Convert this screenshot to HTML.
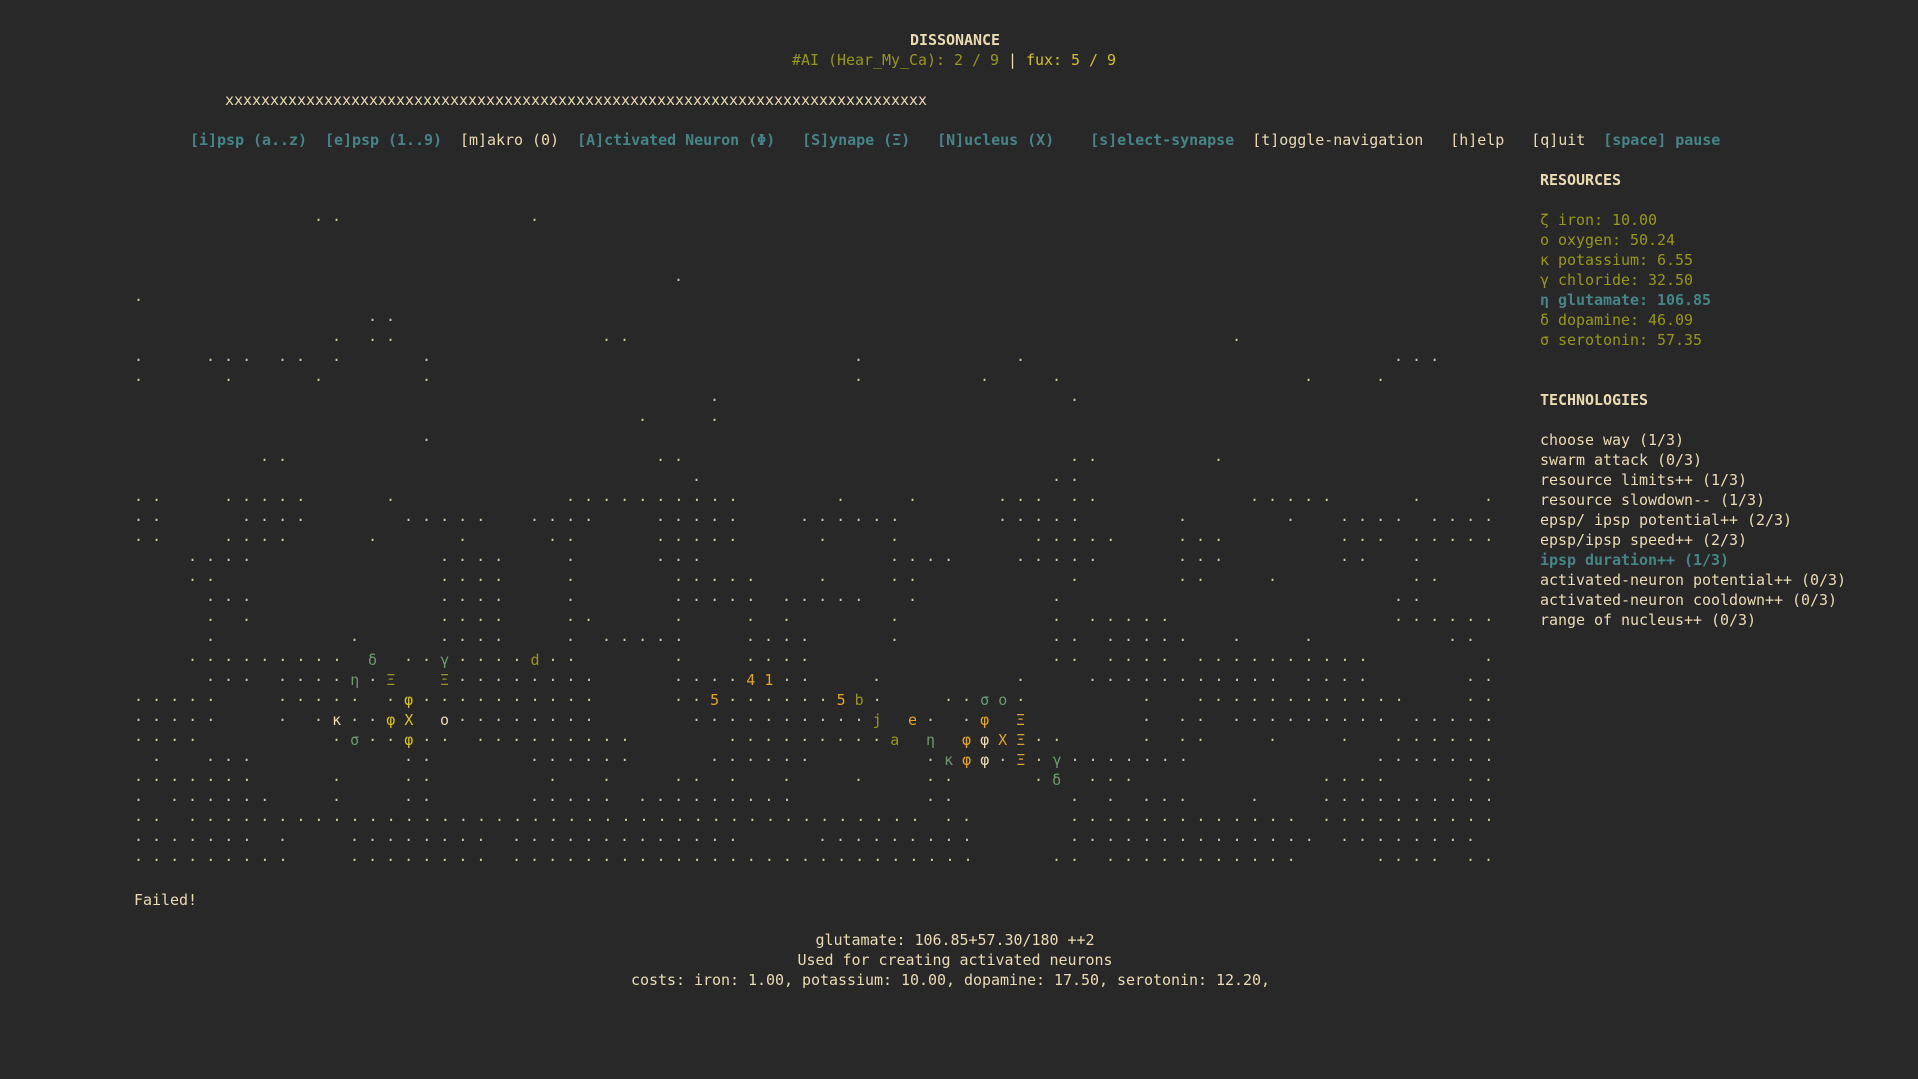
<!DOCTYPE html>
<html><head><meta charset="utf-8">
<style>
html,body{margin:0;padding:0;background:#282828;width:1918px;height:1078px;overflow:hidden}
body{position:relative;top:1px;font-family:"DejaVu Sans Mono","Liberation Mono",monospace;font-size:15px;line-height:20px;color:#ebdbb2;letter-spacing:-0.03px}
.l{position:absolute;white-space:pre;height:20px}
.c{position:absolute;left:0;width:1910px;text-align:center;white-space:pre}
.b{font-weight:bold}
.t{color:#458588;font-weight:bold}
.o{color:#98971a}
.y{color:#d7c21a}
.g{color:#e6a422}
.a{color:#689d6a}
.m{position:absolute;left:134px;top:0;letter-spacing:0}
.m div{position:absolute;left:0;height:20px;white-space:pre;color:#d5c4a1}
.m span{position:absolute;left:calc(var(--k)*18px);font-style:normal}
.m i{font-style:normal}
</style></head><body>
<div class="l b" style="left:910px;top:29px">DISSONANCE</div>
<div class="l" style="left:792px;top:49px"><span class="o">#AI (Hear_My_Ca): 2 / 9</span> | <span class="y">fux: 5 / 9</span></div>
<div class="l" style="left:225px;top:89px">xxxxxxxxxxxxxxxxxxxxxxxxxxxxxxxxxxxxxxxxxxxxxxxxxxxxxxxxxxxxxxxxxxxxxxxxxxxxxx</div>
<div class="l" style="left:190px;top:129px"><span class="t">[i]psp (a..z)</span>  <span class="t">[e]psp (1..9)</span>  [m]akro (0)  <span class="t">[A]ctivated Neuron (Φ)</span>   <span class="t">[S]ynape (Ξ)</span>   <span class="t">[N]ucleus (X)</span>    <span class="t">[s]elect-synapse</span>  [t]oggle-navigation   [h]elp   [q]uit  <span class="t">[space] pause</span></div>

<div class="l b" style="left:1540px;top:169px">RESOURCES</div>
<div class="l o" style="left:1540px;top:209px">ζ iron: 10.00</div>
<div class="l o" style="left:1540px;top:229px">ο oxygen: 50.24</div>
<div class="l o" style="left:1540px;top:249px">κ potassium: 6.55</div>
<div class="l o" style="left:1540px;top:269px">γ chloride: 32.50</div>
<div class="l t" style="left:1540px;top:289px">η glutamate: 106.85</div>
<div class="l o" style="left:1540px;top:309px">δ dopamine: 46.09</div>
<div class="l o" style="left:1540px;top:329px">σ serotonin: 57.35</div>

<div class="l b" style="left:1540px;top:389px">TECHNOLOGIES</div>
<div class="l" style="left:1540px;top:429px">choose way (1/3)</div>
<div class="l" style="left:1540px;top:449px">swarm attack (0/3)</div>
<div class="l" style="left:1540px;top:469px">resource limits++ (1/3)</div>
<div class="l" style="left:1540px;top:489px">resource slowdown-- (1/3)</div>
<div class="l" style="left:1540px;top:509px">epsp/ ipsp potential++ (2/3)</div>
<div class="l" style="left:1540px;top:529px">epsp/ipsp speed++ (2/3)</div>
<div class="l t" style="left:1540px;top:549px">ipsp duration++ (1/3)</div>
<div class="l" style="left:1540px;top:569px">activated-neuron potential++ (0/3)</div>
<div class="l" style="left:1540px;top:589px">activated-neuron cooldown++ (0/3)</div>
<div class="l" style="left:1540px;top:609px">range of nucleus++ (0/3)</div>

<div class="m">
<div style="top:209px"><span style="--k:10">· ·</span><span style="--k:22">·</span></div>
<div style="top:269px"><span style="--k:30">·</span></div>
<div style="top:289px"><span style="--k:0">·</span></div>
<div style="top:309px"><span style="--k:13">· ·</span></div>
<div style="top:329px"><span style="--k:11">·</span><span style="--k:13">· ·</span><span style="--k:26">· ·</span><span style="--k:61">·</span></div>
<div style="top:349px"><span style="--k:0">·</span><span style="--k:4">· · ·</span><span style="--k:8">· ·</span><span style="--k:11">·</span><span style="--k:16">·</span><span style="--k:40">·</span><span style="--k:49">·</span><span style="--k:70">· · ·</span></div>
<div style="top:369px"><span style="--k:0">·</span><span style="--k:5">·</span><span style="--k:10">·</span><span style="--k:16">·</span><span style="--k:40">·</span><span style="--k:47">·</span><span style="--k:51">·</span><span style="--k:65">·</span><span style="--k:69">·</span></div>
<div style="top:389px"><span style="--k:32">·</span><span style="--k:52">·</span></div>
<div style="top:409px"><span style="--k:28">·</span><span style="--k:32">·</span></div>
<div style="top:429px"><span style="--k:16">·</span></div>
<div style="top:449px"><span style="--k:7">· ·</span><span style="--k:29">· ·</span><span style="--k:52">· ·</span><span style="--k:60">·</span></div>
<div style="top:469px"><span style="--k:31">·</span><span style="--k:51">· ·</span></div>
<div style="top:489px"><span style="--k:0">· ·</span><span style="--k:5">· · · · ·</span><span style="--k:14">·</span><span style="--k:24">· · · · · · · · · ·</span><span style="--k:39">·</span><span style="--k:43">·</span><span style="--k:48">· · ·</span><span style="--k:52">· ·</span><span style="--k:62">· · · · ·</span><span style="--k:71">·</span><span style="--k:75">·</span></div>
<div style="top:509px"><span style="--k:0">· ·</span><span style="--k:6">· · · ·</span><span style="--k:15">· · · · ·</span><span style="--k:22">· · · ·</span><span style="--k:29">· · · · ·</span><span style="--k:37">· · · · · ·</span><span style="--k:48">· · · · ·</span><span style="--k:58">·</span><span style="--k:64">·</span><span style="--k:67">· · · ·</span><span style="--k:72">· · · ·</span></div>
<div style="top:529px"><span style="--k:0">· ·</span><span style="--k:5">· · · ·</span><span style="--k:13">·</span><span style="--k:18">·</span><span style="--k:23">· ·</span><span style="--k:29">· · · · ·</span><span style="--k:38">·</span><span style="--k:42">·</span><span style="--k:50">· · · · ·</span><span style="--k:58">· · ·</span><span style="--k:67">· · ·</span><span style="--k:71">· · · · ·</span></div>
<div style="top:549px"><span style="--k:3">· · · ·</span><span style="--k:17">· · · ·</span><span style="--k:24">·</span><span style="--k:29">· · ·</span><span style="--k:42">· · · ·</span><span style="--k:49">· · · · ·</span><span style="--k:58">· · ·</span><span style="--k:67">· ·</span><span style="--k:71">·</span></div>
<div style="top:569px"><span style="--k:3">· ·</span><span style="--k:17">· · · ·</span><span style="--k:24">·</span><span style="--k:30">· · · · ·</span><span style="--k:38">·</span><span style="--k:42">· ·</span><span style="--k:52">·</span><span style="--k:58">· ·</span><span style="--k:63">·</span><span style="--k:71">· ·</span></div>
<div style="top:589px"><span style="--k:4">· · ·</span><span style="--k:17">· · · ·</span><span style="--k:24">·</span><span style="--k:30">· · · · ·</span><span style="--k:36">· · · · ·</span><span style="--k:43">·</span><span style="--k:51">·</span><span style="--k:70">· ·</span></div>
<div style="top:609px"><span style="--k:4">·</span><span style="--k:6">·</span><span style="--k:17">· · · ·</span><span style="--k:24">· ·</span><span style="--k:30">·</span><span style="--k:34">·</span><span style="--k:36">·</span><span style="--k:42">·</span><span style="--k:51">·</span><span style="--k:53">· · · · ·</span><span style="--k:70">· · · · · ·</span></div>
<div style="top:629px"><span style="--k:4">·</span><span style="--k:12">·</span><span style="--k:17">· · · ·</span><span style="--k:24">·</span><span style="--k:26">· · · · ·</span><span style="--k:34">· · · ·</span><span style="--k:42">·</span><span style="--k:51">· ·</span><span style="--k:54">· · · · ·</span><span style="--k:61">·</span><span style="--k:65">·</span><span style="--k:73">· ·</span></div>
<div style="top:649px"><span style="--k:3">· · · · · · · · ·</span><span style="--k:13"><i class="a">δ</i></span><span style="--k:15">· · <i class="a">γ</i> · · · · <i class="o">d</i> · ·</span><span style="--k:30">·</span><span style="--k:34">· · · ·</span><span style="--k:51">· ·</span><span style="--k:54">· · · ·</span><span style="--k:59">· · · · · · · · · ·</span><span style="--k:75">·</span></div>
<div style="top:669px"><span style="--k:4">· · ·</span><span style="--k:8">· · · · <i class="a">η</i> · <i class="o">Ξ</i></span><span style="--k:17"><i class="o">Ξ</i> · · · · · · · ·</span><span style="--k:30">· · · · <i class="g">4</i> <i class="g">1</i> · ·</span><span style="--k:41">·</span><span style="--k:49">·</span><span style="--k:53">· · · · · · · · · · ·</span><span style="--k:65">· · · ·</span><span style="--k:74">· ·</span></div>
<div style="top:689px"><span style="--k:0">· · · · ·</span><span style="--k:8">· · · · ·</span><span style="--k:14">· <i class="y">φ</i> · · · · · · · · · ·</span><span style="--k:30">· · <i class="g">5</i> · · · · · · <i class="g">5</i> <i class="o">b</i> ·</span><span style="--k:45">· · <i class="a">σ</i> <i class="a">ο</i> ·</span><span style="--k:56">·</span><span style="--k:59">· · · · · · · · · · · ·</span><span style="--k:74">· ·</span></div>
<div style="top:709px"><span style="--k:0">· · · · ·</span><span style="--k:8">·</span><span style="--k:10">· <i style="color:#ebdbb2">κ</i> · · <i class="y">φ</i> <i class="y">Χ</i></span><span style="--k:17"><i style="color:#ebdbb2">ο</i> · · · · · · · ·</span><span style="--k:31">· · · · · · · · · · <i class="o">j</i></span><span style="--k:43"><i class="g">e</i> ·</span><span style="--k:46">· <i class="g">φ</i></span><span style="--k:49"><i class="g">Ξ</i></span><span style="--k:56">·</span><span style="--k:58">· ·</span><span style="--k:61">· · · · · · · · ·</span><span style="--k:71">· · · · ·</span></div>
<div style="top:729px"><span style="--k:0">· · · ·</span><span style="--k:11">· <i class="a">σ</i> · · <i class="y">φ</i> · ·</span><span style="--k:19">· · · · · · · · ·</span><span style="--k:33">· · · · ·</span><span style="--k:38">· · · · <i class="o">a</i></span><span style="--k:44"><i class="a">η</i></span><span style="--k:46"><i class="g">φ</i> <i style="color:#ebdbb2">φ</i> <i class="g">Χ</i> <i class="g">Ξ</i> · ·</span><span style="--k:56">·</span><span style="--k:58">· ·</span><span style="--k:63">·</span><span style="--k:67">·</span><span style="--k:70">· · · · · ·</span></div>
<div style="top:749px"><span style="--k:1">·</span><span style="--k:4">· · ·</span><span style="--k:15">· ·</span><span style="--k:22">· · · · · ·</span><span style="--k:32">· · · · · ·</span><span style="--k:44">· <i class="a">κ</i> <i class="g">φ</i> <i style="color:#ebdbb2">φ</i> · <i class="g">Ξ</i> · <i class="a">γ</i> · · · · · · ·</span><span style="--k:69">· · · · · · ·</span></div>
<div style="top:769px"><span style="--k:0">· · · · · · ·</span><span style="--k:11">·</span><span style="--k:15">· ·</span><span style="--k:23">·</span><span style="--k:26">·</span><span style="--k:30">· ·</span><span style="--k:33">·</span><span style="--k:36">·</span><span style="--k:40">·</span><span style="--k:44">· ·</span><span style="--k:50">· <i class="a">δ</i></span><span style="--k:53">· · ·</span><span style="--k:66">· ·</span><span style="--k:68">· ·</span><span style="--k:74">· ·</span></div>
<div style="top:789px"><span style="--k:0">·</span><span style="--k:2">· · · · · ·</span><span style="--k:11">·</span><span style="--k:15">· ·</span><span style="--k:22">· · · · ·</span><span style="--k:28">· · · · · · · · ·</span><span style="--k:44">· ·</span><span style="--k:52">·</span><span style="--k:54">·</span><span style="--k:56">· · ·</span><span style="--k:62">·</span><span style="--k:66">· · · · · · · · · ·</span></div>
<div style="top:809px"><span style="--k:0">· ·</span><span style="--k:3">· · · · · · · · · · · · · · · · · · · · · · · · · · · · · · · · · · · · · · · · ·</span><span style="--k:45">· ·</span><span style="--k:52">· · · · · · · · · · · · ·</span><span style="--k:66">· · · · · · · · · ·</span></div>
<div style="top:829px"><span style="--k:0">· · · · · · ·</span><span style="--k:8">·</span><span style="--k:12">· · · · · · · ·</span><span style="--k:21">· · · · ·</span><span style="--k:26">· · · · · · · ·</span><span style="--k:38">· · · · · · · · ·</span><span style="--k:52">· · · · · · · · · · · · · ·</span><span style="--k:67">· · · · · · ·</span><span style="--k:74">·</span></div>
<div style="top:849px"><span style="--k:0">· · · · · · · · ·</span><span style="--k:12">· · · · · · · ·</span><span style="--k:21">· · · · · · · · · · · · · · · · · · · · · · · · · ·</span><span style="--k:51">· ·</span><span style="--k:54">· · · · · · · · · · ·</span><span style="--k:69">· · · ·</span><span style="--k:74">· ·</span></div>
</div>

<div class="l" style="left:134px;top:889px">Failed!</div>
<div class="c" style="top:929px">glutamate: 106.85+57.30/180 ++2</div>
<div class="c" style="top:949px">Used for creating activated neurons</div>
<div class="c" style="top:969px">costs: iron: 1.00, potassium: 10.00, dopamine: 17.50, serotonin: 12.20, </div>
</body></html>
